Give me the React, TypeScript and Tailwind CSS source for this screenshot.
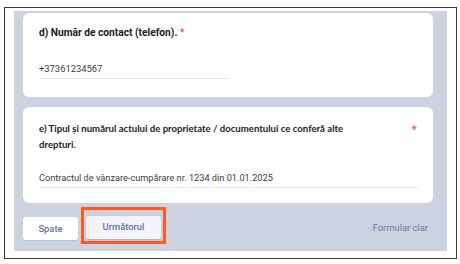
const Card = (props: { children: React.ReactNode; className?: string }) => {
  return (
    <div className={"bg-white rounded-[6px] pl-[16px] pr-[15px] " + (props.className ?? "")}>
      {props.children}
    </div>
  );
};

const App = () => {
  return (
    <div className="w-[460px] h-[264px] bg-white overflow-hidden">
      <div className="ml-[4px] mt-[7px] w-[453px] h-[252px] border border-[#3a3a3a] pl-[9px] pr-[9px] pt-[3px] pb-[7px]">
        <div className="h-full bg-[#cdd2e1] pl-[9px] pr-[14px] pt-[2px] pb-[7px] flex flex-col">
          <Card className="h-[87px] pt-[13px]">
            <p className="font-['Roboto',sans-serif] font-bold text-[10.2px] leading-[14px] text-[#202124]">
              d) Număr de contact (telefon).{" "}
              <span className="text-[#e0454a] font-normal">*</span>
            </p>
            <div className="mt-[23px] w-[189px] border-b border-[#e4e5ea] pb-[3px]">
              <p className="font-['Roboto',sans-serif] text-[9.4px] leading-[12px] text-[#3c4043]">
                +37361234567
              </p>
            </div>
          </Card>

          <Card className="h-[100px] mt-[10px] pt-[14px]">
            <div className="flex justify-between">
              <p className="w-[340px] font-['Lato',sans-serif] font-bold text-[9.6px] leading-[16px] text-[#202124]">
                e) Tipul și numărul actului de proprietate / documentului ce conferă alte drepturi.
              </p>
              <span className="text-[#e0454a] text-[10px] leading-[16px] mr-[1px]">*</span>
            </div>
            <div className="mt-[19px] border-b border-[#e9eaee] pb-[3px]">
              <p className="font-['Roboto',sans-serif] text-[9.2px] leading-[12px] text-[#3c4043]">
                Contractul de vânzare-cumpărare nr. 1234 din 01.01.2025
              </p>
            </div>
          </Card>

          <div className="mt-[4px] flex items-center">
            <button className="mt-[6px] w-[55px] h-[23px] bg-white rounded-[3px] shadow-[0_1px_1px_rgba(60,64,67,0.15)] font-['Roboto',sans-serif] font-medium text-[9.4px] text-[#6570a0]">
              Spate
            </button>
            <div className="ml-[3px] border-[3px] border-[#ff5a1f] p-[2px]">
              <button className="w-[75px] h-[23px] bg-[#f4f4f8] rounded-[3px] shadow-[0_1px_2px_rgba(60,64,67,0.25)] font-['Roboto',sans-serif] font-medium text-[9.4px] text-[#6570a0]">
                Următorul
              </button>
            </div>
            <span className="ml-auto mr-[5px] mt-[5px] font-['Roboto',sans-serif] text-[9.4px] text-[#6e78a8]">
              Formular clar
            </span>
          </div>
        </div>
      </div>
    </div>
  );
};

export default App;
